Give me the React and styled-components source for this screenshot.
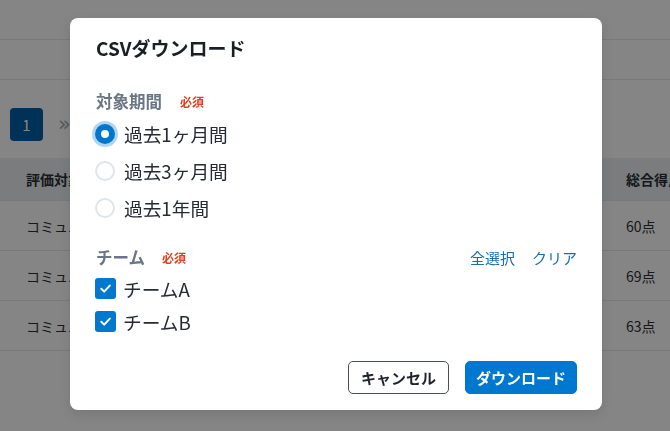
import React, { useState } from 'react'
import styled, { createGlobalStyle, css } from 'styled-components'

const GlobalStyle = createGlobalStyle`
  html, body {
    margin: 0;
    padding: 0;
    background: #ffffff;
    font-family: "Noto Sans CJK JP", "Noto Sans", sans-serif;
  }
  * { box-sizing: border-box; }
`

// ---- page behind the dialog ----

const Page = styled.div`
  width: 670px;
  height: 431px;
  overflow: hidden;
  background: #ffffff;
`

const TopBar = styled.div`
  height: 40px;
  border-bottom: 1px solid #e4e7eb;
`

const SubBar = styled.div`
  height: 40px;
  border-bottom: 1px solid #e4e7eb;
`

const Pager = styled.div`
  display: flex;
  align-items: center;
  gap: 15px;
  padding: 28px 10px 17px;
`

const PageBox = styled.div`
  width: 33px;
  height: 33px;
  border-radius: 4px;
  background: #005fa6;
  color: #ffffff;
  display: flex;
  align-items: center;
  justify-content: center;
  font-size: 15px;
`

const PageNext = styled.span`
  color: #a3abb4;
  font-size: 21px;
  line-height: 1;
  font-family: "DejaVu Sans", sans-serif;
`

const Row = styled.div`
  display: flex;
  justify-content: space-between;
  align-items: center;
  height: ${p => (p.$head ? 43 : 50)}px;
  padding: 0 0 0 26px;
  background: ${p => (p.$head ? '#eceef1' : '#ffffff')};
  border-bottom: 1px solid #e4e7eb;
  font-size: 14px;
  font-weight: ${p => (p.$head ? 700 : 400)};
  color: #2a2f36;
`

const ScoreCell = styled.span`
  width: 44px;
  white-space: nowrap;
  overflow: hidden;
`

// ---- dialog ----

const Overlay = styled.div`
  position: fixed;
  inset: 0;
  background: rgba(0, 0, 0, 0.48);
  display: flex;
  align-items: flex-start;
  justify-content: flex-start;
  padding: 18px 0 0 70px;
`

const Dialog = styled.div`
  width: 532px;
  height: 392px;
  background: #ffffff;
  border-radius: 8px;
  box-shadow: 0 4px 14px rgba(0, 0, 0, 0.12);
  padding: 16px 25px 16px 25px;
  display: flex;
  flex-direction: column;
`

const Title = styled.h2`
  margin: 0 0 0 1px;
  font-size: 19px;
  line-height: 28px;
  font-weight: 700;
  color: #1b1f24;
`

const SectionHead = styled.div`
  display: flex;
  align-items: center;
  justify-content: space-between;
  height: 24px;
  padding-left: 1px;
  margin-top: ${p => p.$top}px;
`

const LabelGroup = styled.div`
  display: flex;
  align-items: center;
  gap: ${p => p.$gap}px;
`

const SectionLabel = styled.span`
  font-size: 16.5px;
  font-weight: 700;
  color: #6b7684;
`

const Required = styled.span`
  font-size: 12px;
  font-weight: 700;
  color: #e0401e;
`

const Links = styled.div`
  display: flex;
  gap: 17px;
`

const LinkButton = styled.button`
  border: none;
  background: none;
  padding: 0;
  font-family: inherit;
  font-size: 15px;
  color: #1a6fb3;
  cursor: pointer;
`

const Options = styled.div`
  display: flex;
  flex-direction: column;
  margin-top: ${p => p.$top}px;
`

const Option = styled.label`
  display: flex;
  align-items: center;
  gap: ${p => p.$gap}px;
  height: ${p => p.$h}px;
  font-size: 18.7px;
  color: #262b33;
  cursor: pointer;
`

const RadioMark = styled.span`
  width: 20px;
  height: 20px;
  border-radius: 50%;
  flex-shrink: 0;
  display: flex;
  align-items: center;
  justify-content: center;
  ${p =>
    p.$checked
      ? css`
          background: #0077cc;
          box-shadow: 0 0 0 3px rgba(0, 119, 204, 0.3);
          &::after {
            content: '';
            width: 8px;
            height: 8px;
            border-radius: 50%;
            background: #ffffff;
          }
        `
      : css`
          border: 2px solid #dfe5ec;
        `}
`

const CheckMark = styled.span`
  width: 21px;
  height: 21px;
  border-radius: 3px;
  flex-shrink: 0;
  display: flex;
  align-items: center;
  justify-content: center;
  background: ${p => (p.$checked ? '#0078d0' : '#ffffff')};
  border: ${p => (p.$checked ? 'none' : '2px solid #dfe5ec')};
`

const Footer = styled.div`
  margin-top: auto;
  display: flex;
  justify-content: flex-end;
  gap: 16px;
`

const Button = styled.button`
  height: 33px;
  padding: 0 ${p => (p.$primary ? 10 : 12)}px;
  border-radius: 5px;
  font-family: inherit;
  font-size: 15px;
  font-weight: 700;
  cursor: pointer;
  ${p =>
    p.$primary
      ? css`
          background: #0078d0;
          color: #ffffff;
          border: 1px solid #0078d0;
        `
      : css`
          background: #ffffff;
          color: #1f242b;
          border: 1px solid #4a5058;
        `}
`

const Check = () => (
  <svg width="13" height="13" viewBox="0 0 13 13">
    <path d="M2.3 6.8 L5.2 9.6 L10.8 3.6" fill="none" stroke="#fff" strokeWidth="2" strokeLinecap="round" strokeLinejoin="round" />
  </svg>
)

const periods = ['過去1ヶ月間', '過去3ヶ月間', '過去1年間']
const teams = ['チームA', 'チームB']
const rows = ['60点', '69点', '63点']

export default function App() {
  const [period, setPeriod] = useState(0)
  const [picked, setPicked] = useState([true, true])

  return (
    <>
      <GlobalStyle />
      <Page>
        <TopBar />
        <SubBar />
        <Pager>
          <PageBox>1</PageBox>
          <PageNext>»</PageNext>
        </Pager>
        <Row $head>
          <span>評価対象者</span>
          <ScoreCell>総合得点</ScoreCell>
        </Row>
        {rows.map(s => (
          <Row key={s}>
            <span>コミュニケーション</span>
            <ScoreCell>{s}</ScoreCell>
          </Row>
        ))}
      </Page>

      <Overlay>
        <Dialog>
          <Title>CSVダウンロード</Title>

          <SectionHead $top={27}>
            <LabelGroup $gap={18}>
              <SectionLabel>対象期間</SectionLabel>
              <Required>必須</Required>
            </LabelGroup>
          </SectionHead>
          <Options $top={2}>
            {periods.map((p, i) => (
              <Option key={p} $h={37} $gap={9} onClick={() => setPeriod(i)}>
                <RadioMark $checked={period === i} />
                {p}
              </Option>
            ))}
          </Options>

          <SectionHead $top={19}>
            <LabelGroup $gap={17}>
              <SectionLabel>チーム</SectionLabel>
              <Required>必須</Required>
            </LabelGroup>
            <Links>
              <LinkButton onClick={() => setPicked([true, true])}>全選択</LinkButton>
              <LinkButton onClick={() => setPicked([false, false])}>クリア</LinkButton>
            </Links>
          </SectionHead>
          <Options $top={3}>
            {teams.map((t, i) => (
              <Option
                key={t}
                $h={33}
                $gap={7}
                onClick={() => setPicked(picked.map((v, j) => (j === i ? !v : v)))}
              >
                <CheckMark $checked={picked[i]}>{picked[i] && <Check />}</CheckMark>
                {t}
              </Option>
            ))}
          </Options>

          <Footer>
            <Button>キャンセル</Button>
            <Button $primary>ダウンロード</Button>
          </Footer>
        </Dialog>
      </Overlay>
    </>
  )
}
